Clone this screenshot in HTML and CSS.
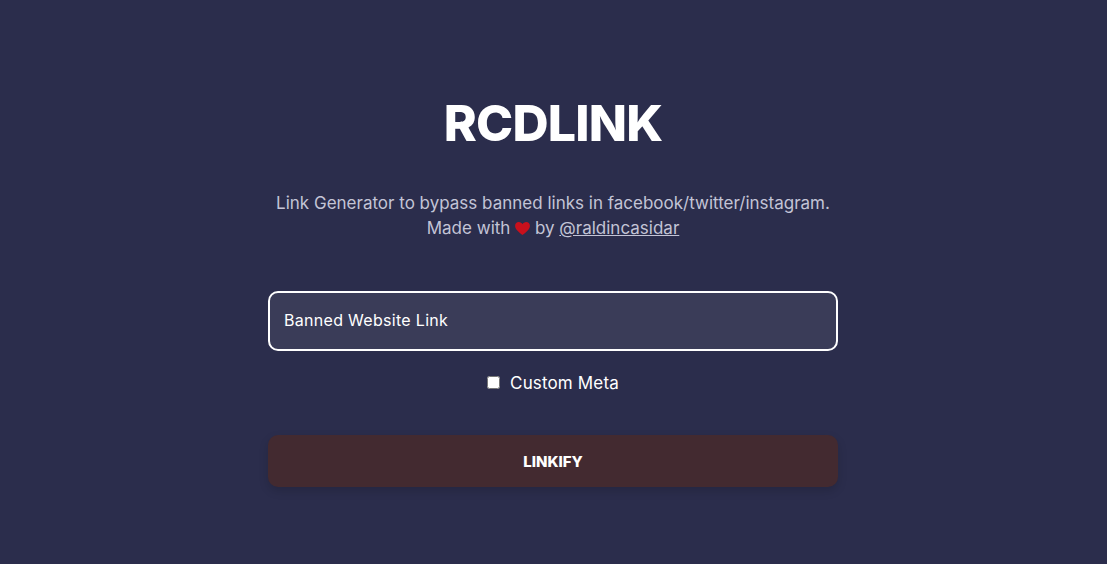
FILE: index.html
```html
<!DOCTYPE html>
<html lang="en">

<head>
    <meta charset="UTF-8">
    <meta name="viewport" content="width=device-width, initial-scale=1.0">
    <title>RCDLINK</title>
    <link rel="stylesheet" href="styles.css">
</head>

<body>
    <div class="w">
        <h1 class="title">RCDLINK</h1>
        <p class="desc">
            Link Generator to bypass banned links in facebook/twitter/instagram.<br>
            Made with
            <svg class="heart" viewBox="0 0 16 14" aria-label="love">
                <path d="M8 14C6.600 12.600 0 8.600 0 4.200 0 1.800 1.800 0 4 0c1.700 0 3.200 1 4 2.400C8.800 1 10.300 0 12 0c2.200 0 4 1.800 4 4.200C16 8.600 9.400 12.600 8 14z" />
            </svg>
            by <a href="#">@raldincasidar</a>
        </p>
        <form class="form">
            <input class="link-input" type="text" placeholder="Banned Website Link">
            <label class="meta"><input type="checkbox"> <span>Custom Meta</span></label>
            <button class="btn" type="button">LINKIFY</button>
        </form>
    </div>
</body>

</html>
```

FILE: styles.css
```css
* {
    margin: 0;
    padding: 0;
    box-sizing: border-box;
}

body {
    height: 564px;
    overflow: hidden;
    background-color: #2b2d4c;
    color: #fff;
    font-family: "Inter", "Liberation Sans", sans-serif;
}

.w {
    width: 570px;
    margin-left: 268px;
    padding-top: 90px;
    text-align: center;
}

.title {
    font-size: 50px;
    line-height: 66px;
    font-weight: 800;
    letter-spacing: -0.8px;
}

.desc {
    margin-top: 35px;
    font-size: 17px;
    line-height: 25px;
    color: #c3c4d6;
}

.desc a {
    color: #c3c4d6;
}

.heart {
    width: 15px;
    height: 13px;
    fill: #c8101c;
    vertical-align: -1px;
}

.form {
    display: flex;
    flex-direction: column;
    margin-top: 50px;
}

.link-input {
    width: 100%;
    height: 60px;
    padding: 0 14px 3px;
    background-color: #3a3c58;
    border: 2px solid #fff;
    border-radius: 10px;
    color: #fff;
    font-family: inherit;
    font-size: 16px;
    letter-spacing: .3px;
    outline: none;
}

.link-input::placeholder {
    color: #fff;
    opacity: 1;
}

.meta {
    display: flex;
    justify-content: center;
    align-items: center;
    gap: 10px;
    margin-top: 20px;
    font-size: 17px;
    letter-spacing: .15px;
    line-height: 24px;
}

.meta input {
    width: 13px;
    height: 13px;
    margin-top: -2px;
}

.btn {
    height: 52px;
    margin-top: 40px;
    background-color: #432a30;
    border: none;
    border-radius: 10px;
    box-shadow: 0 4px 10px rgba(0, 0, 0, .15);
    color: #fff;
    font-family: inherit;
    font-size: 15px;
    font-weight: 800;
}
```
